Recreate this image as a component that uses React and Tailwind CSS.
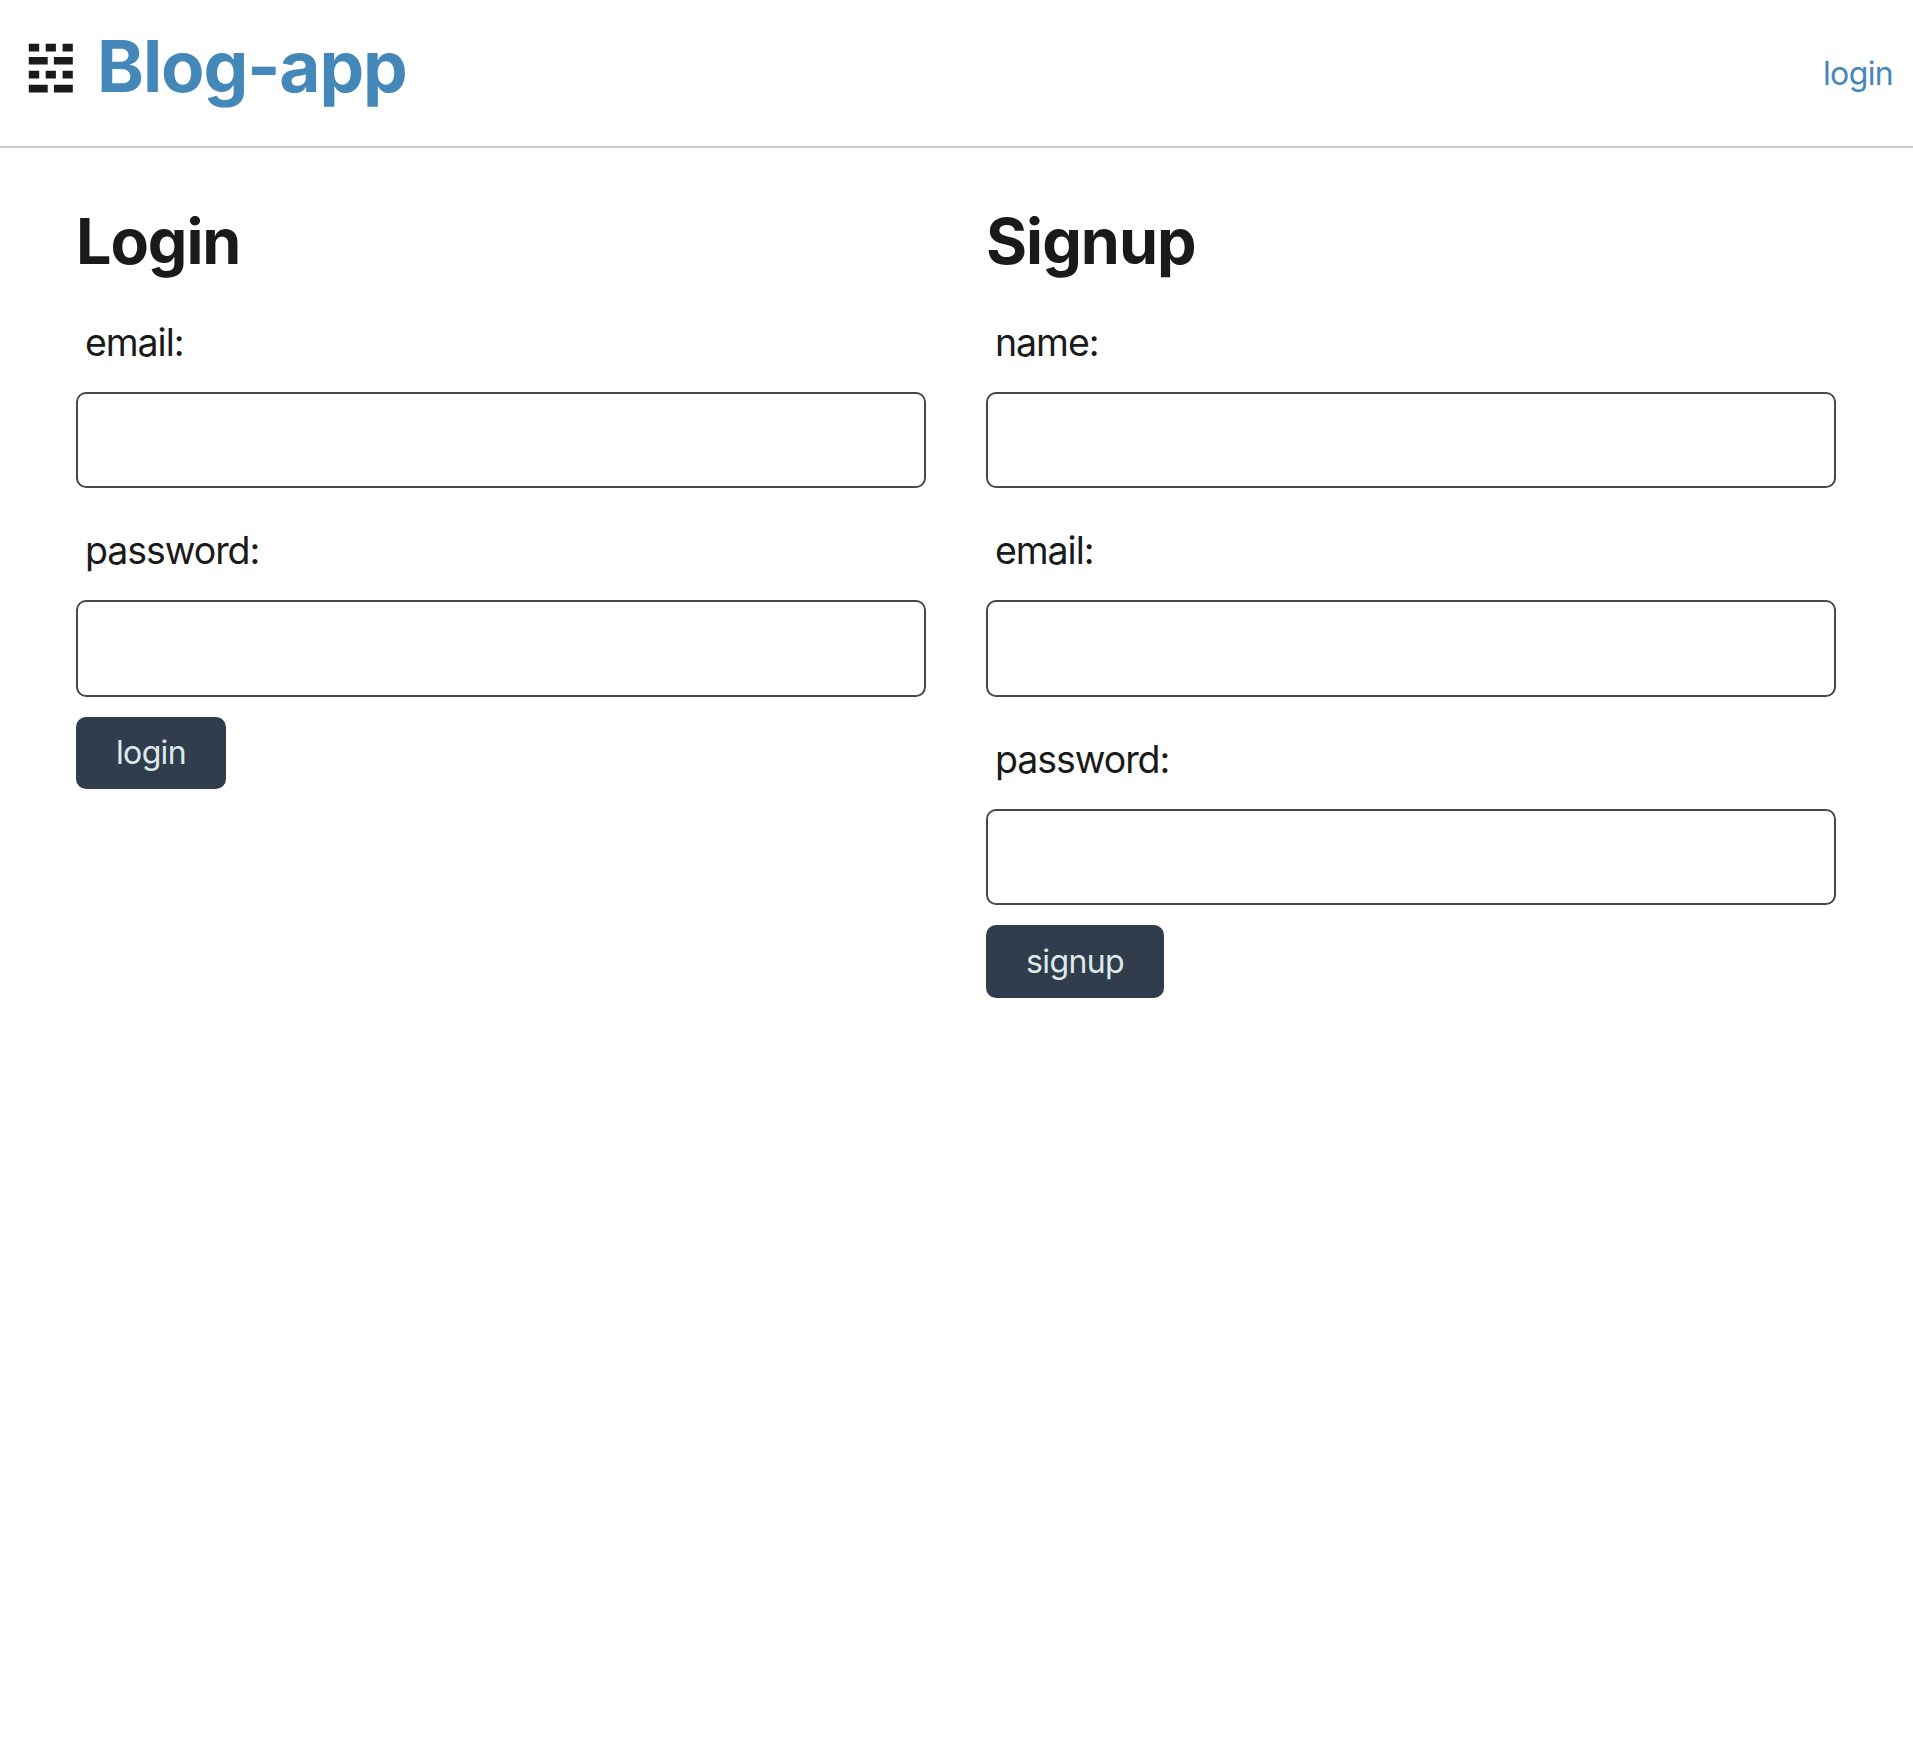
const Field = ({ label, type = "text" }) => (
  <label className="block">
    <span className="block h-[112px] pl-[9px] pt-[40px] text-[37.5px] leading-[46px] tracking-[-1.05px]">{label}</span>
    <input type={type} className="block h-[96.4px] w-full rounded-[10px] border-2 border-[#484848] bg-white px-4 text-[32px]" />
  </label>
);

const Button = ({ children, className }) => (
  <button className={"mt-5 block h-[72.4px] rounded-[10px] bg-[#313d4d] pt-[1px] text-[32px] leading-[40px] tracking-[-0.65px] text-[#dceae9] " + className}>
    {children}
  </button>
);

export default function App() {
  return (
    <div className="min-h-[1750px] bg-white font-['Inter',sans-serif] text-[#1a1a1a]">
      <header className="flex h-[148px] justify-between border-b-2 border-[#cbcbcb] pl-[28px] pr-[20px]">
        <div className="flex">
          <svg className="mt-[43px] h-[50px] w-[46px]" viewBox="0 0 46 50" fill="#1a1a1a">
            <path d="M.8.8h10.4v7.6H.8zM17.7.8h10.2v7.6H17.7zM34.6.8h10.2v7.6H34.6zM.8 14h18.9v7.6H.8zM25.9 14h18.9v7.6H25.9zM.8 27.8h10.4v7.6H.8zM17.7 27.8h10.2v7.6H17.7zM34.6 27.8h10.2v7.6H34.6zM.8 41.8h18.9v7.6H.8zM25.9 41.8h18.9v7.6H25.9z" />
          </svg>
          <h1 className="ml-[23px] mt-[23px] text-[71px] font-bold leading-[86px] tracking-[-1.1px] text-[#4388b9]">Blog-app</h1>
        </div>
        <a href="#" className="mt-[54px] text-[32px] leading-[40px] tracking-[-0.65px] text-[#4388b9]">login</a>
      </header>
      <main className="grid grid-cols-2 gap-[60px] pl-[76px] pr-[77px] pt-[54px]">
        <form>
          <h2 className="text-[62.8px] font-bold leading-[78px] tracking-[-1.1px]">Login</h2>
          <Field label="email:" />
          <Field label="password:" type="password" />
          <Button className="w-[150px]">login</Button>
        </form>
        <form>
          <h2 className="text-[62.8px] font-bold leading-[78px] tracking-[-1px]">Signup</h2>
          <Field label="name:" />
          <Field label="email:" />
          <Field label="password:" type="password" />
          <Button className="w-[178px]">signup</Button>
        </form>
      </main>
    </div>
  );
}
